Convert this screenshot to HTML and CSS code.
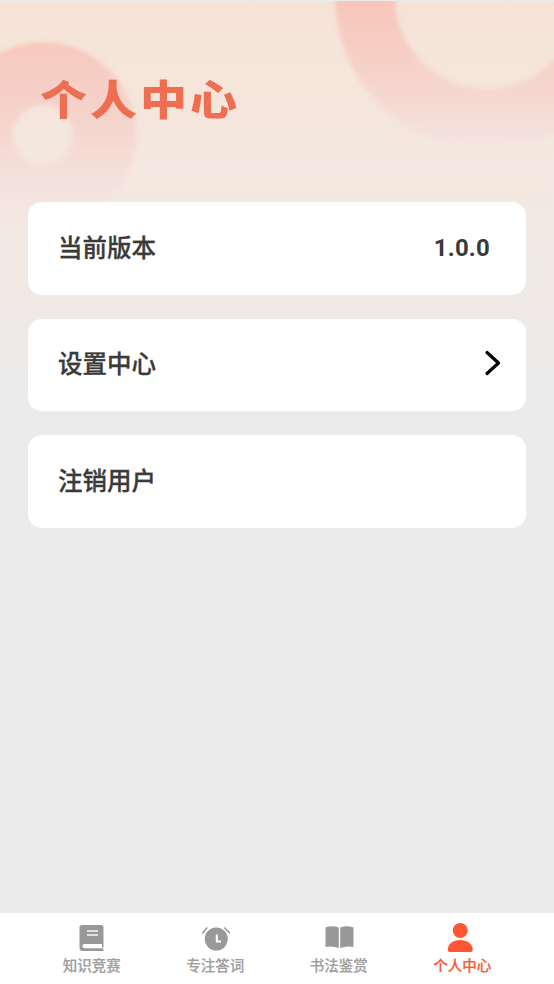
FILE: index.html
```html
<!DOCTYPE html>
<html lang="zh-CN">
<head>
  <meta charset="UTF-8">
  <title>个人中心</title>
  <link rel="stylesheet" href="styles.css">
</head>
<body>
  <div class="page">
    <main class="content">
      <svg class="decor" width="554" height="240" viewBox="0 0 554 240" aria-hidden="true">
        <defs>
          <linearGradient id="ringFade" gradientUnits="userSpaceOnUse" x1="0" y1="0" x2="0" y2="150">
            <stop offset="0" stop-color="#f8c6ba"/>
            <stop offset="0.5" stop-color="#f6d3ca"/>
            <stop offset="1" stop-color="#f4e5e1"/>
          </linearGradient>
          <linearGradient id="dotFade" gradientUnits="userSpaceOnUse" x1="0" y1="42" x2="0" y2="215">
            <stop offset="0" stop-color="#f7c9be"/>
            <stop offset="0.45" stop-color="#f5d4cc"/>
            <stop offset="0.8" stop-color="#f4e2dc"/>
            <stop offset="1" stop-color="#f4e7e2"/>
          </linearGradient>
        </defs>
        <circle class="decor-shape" cx="487" cy="-4" r="122" fill="none" stroke="url(#ringFade)" stroke-width="60"/>
        <circle class="decor-shape" cx="43" cy="134" r="61.500" fill="none" stroke="url(#dotFade)" stroke-width="63"/>
      </svg>

      <h1 class="title">个人中心</h1>

      <section class="list">
        <div class="row">
          <span class="row-label">当前版本</span>
          <span class="row-value">1.0.0</span>
        </div>
        <div class="row">
          <span class="row-label">设置中心</span>
          <svg class="chevron" width="18" height="26" viewBox="0 0 18 26" aria-hidden="true">
            <path d="M3 2.500 L14.500 13 L3 23.500" fill="none" stroke="#000" stroke-width="3.200" stroke-linecap="round" stroke-linejoin="round"/>
          </svg>
        </div>
        <div class="row">
          <span class="row-label">注销用户</span>
        </div>
      </section>
    </main>

    <nav class="tabbar">
      <div class="tab">
        <svg class="tab-icon" width="30" height="30" viewBox="0 0 30 30" aria-hidden="true">
          <path fill="#999" d="M5 3 H24 A2.500 2.500 0 0 1 26.500 5.500 V25.500 H25.500 V27 H26.500 V29 H6 A3.500 3.500 0 0 1 2.500 25.500 V5.500 A2.500 2.500 0 0 1 5 3 Z"/>
          <path fill="#fff" d="M7.500 22 H25 V26.200 H7.500 A2.100 2.100 0 0 1 7.500 22 Z"/>
          <rect x="10" y="8" width="11" height="2" fill="#e0e0e0"/>
          <rect x="10" y="12" width="11" height="2" fill="#e0e0e0"/>
        </svg>
        <span class="tab-label">知识竞赛</span>
      </div>
      <div class="tab">
        <svg class="tab-icon" width="30" height="30" viewBox="0 0 30 30" aria-hidden="true">
          <circle cx="16.250" cy="17" r="11.500" fill="#999"/>
          <path d="M16.800 12.500 V19.500 H21" fill="none" stroke="#fff" stroke-width="2"/>
          <path d="M6.750 6 L2.750 11 M24.750 6 L29.750 11" fill="none" stroke="#999" stroke-width="1.600" stroke-linecap="round"/>
        </svg>
        <span class="tab-label">专注答词</span>
      </div>
      <div class="tab">
        <svg class="tab-icon" width="30" height="30" viewBox="0 0 30 30" aria-hidden="true">
          <path fill="#999" d="M1.500 5.500 Q8 3 14.800 5.500 V26 Q8 23.500 1.500 25 Z"/>
          <path fill="#999" d="M16.200 5.500 Q23 3 29.500 5.500 V25 Q23 23.500 16.200 26 Z"/>
        </svg>
        <span class="tab-label">书法鉴赏</span>
      </div>
      <div class="tab tab-active">
        <svg class="tab-icon" width="30" height="30" viewBox="0 0 30 30" aria-hidden="true">
          <circle cx="13.250" cy="8.500" r="7.500" fill="#ff5733"/>
          <path fill="#ff5733" d="M0.750 28 C0.750 22 6 18 13.250 18 C20.500 18 25.750 22 25.750 28 A2 2 0 0 1 23.750 30 H2.750 A2 2 0 0 1 0.750 28 Z"/>
        </svg>
        <span class="tab-label">个人中心</span>
      </div>
    </nav>
  </div>
</body>
</html>
```

FILE: styles.css
```css
* {
  box-sizing: border-box;
}
body {
  margin: 0;
  font-family: "Noto Sans CJK SC", "Noto Sans", sans-serif;
  background: #ebebeb;
}
.page {
  display: flex;
  flex-direction: column;
  height: 984px;
  overflow: hidden;
}
.content {
  position: relative;
  flex: 1;
  padding: 0 28px;
  background: linear-gradient(to bottom, #f6e3d7 0, #f4e8e0 180px, #ebebeb 400px);
  border-top: 1px solid #ebebeb;
}
.decor {
  position: absolute;
  top: 0;
  left: 0;
}
.decor-shape {
  filter: blur(2px);
}
.title {
  position: relative;
  margin: 0;
  padding: 65px 0 0 12px;
  height: 201px;
  font-size: 47px;
  line-height: 66px;
  font-weight: 900;
  letter-spacing: 3px;
  color: #ee6e52;
  transform: scaleY(0.88);
  transform-origin: 0 81px;
}
.list {
  position: relative;
  display: flex;
  flex-direction: column;
  gap: 24px;
}
.row {
  display: flex;
  align-items: center;
  justify-content: space-between;
  height: 92.500px;
  padding: 0 24px 4px 30px;
  background: #fff;
  border-radius: 14px;
}
.row-label {
  font-size: 24.500px;
  font-weight: 500;
  -webkit-text-stroke: 0.300px #3a3a3a;
  color: #3a3a3a;
}
.row-value {
  margin-top: 3px;
  padding-right: 12px;
  font-family: Roboto, "Noto Sans", sans-serif;
  font-size: 24px;
  font-weight: 700;
  letter-spacing: 0.200px;
  color: #3a3a3a;
}
.tabbar {
  display: flex;
  height: 71px;
  padding: 9px 30px 0;
  background: #fff;
}
.tab {
  flex: 1;
  display: flex;
  flex-direction: column;
  align-items: center;
  color: #a0a0a0;
}
.tab-icon {
  display: block;
}
.tab-label {
  font-size: 14.500px;
  line-height: 20px;
  font-weight: 500;
  -webkit-text-stroke: 0.200px currentColor;
  margin-top: 3px;
}
.tab-active {
  color: #ff5733;
}
```
